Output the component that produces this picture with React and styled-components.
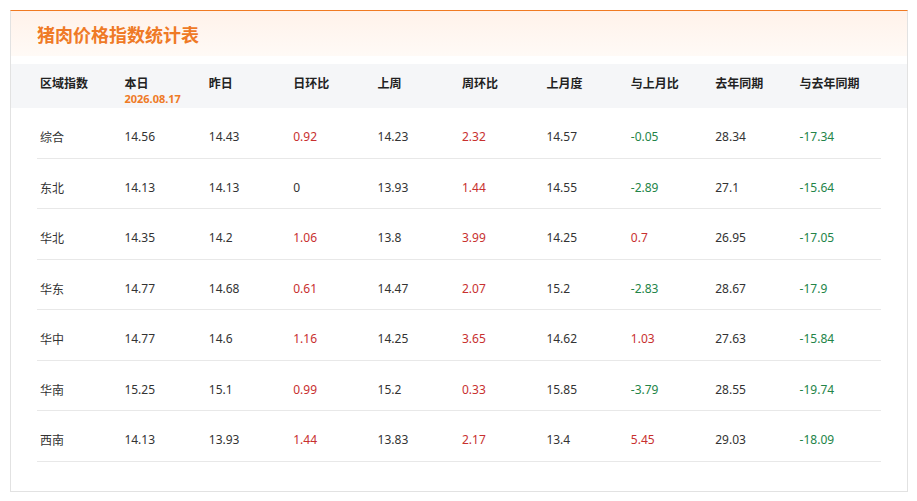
import React from 'react'
import styled, { createGlobalStyle } from 'styled-components'

const GlobalStyle = createGlobalStyle`
  html, body {
    margin: 0;
    padding: 0;
    background: #fff;
  }
  body {
    font-family: "Noto Sans", "Noto Sans CJK SC", sans-serif;
    color: #333;
  }
`

const Page = styled.div`
  padding: 10px 9px 10px 10px;
`

const Card = styled.div`
  border: 1px solid #e2e2e2;
  border-top: 1px solid #f07a22;
  background: #fff;
  padding-bottom: 29px;
`

const CardHeader = styled.div`
  height: 45px;
  display: flex;
  align-items: center;
  padding-left: 26px;
  background: linear-gradient(180deg, #fff2ea 0%, #fffaf6 100%);
  margin-bottom: 8px;
`

const Title = styled.h1`
  margin: 0;
  font-family: "Noto Sans CJK SC", sans-serif;
  font-size: 18px;
  font-weight: 700;
  color: #ef7a26;
  letter-spacing: 0;
`

const HeadBar = styled.div`
  background: #f5f6f8;
  height: 44px;
  padding: 0 26px;
`

const Grid = styled.div`
  display: grid;
  grid-template-columns: repeat(10, 1fr);
`

const HeadCell = styled.div`
  padding: 10px 3px 0;
`

const HeadLabel = styled.div`
  font-family: "Noto Sans CJK SC", sans-serif;
  font-size: 12px;
  font-weight: 700;
  line-height: 18px;
  color: #222;
`

const DateLabel = styled.div`
  font-size: 11px;
  font-weight: 700;
  line-height: 14px;
  color: #ef7a26;
`

const Body = styled.div`
  margin: 0 26px;
`

const Row = styled(Grid)`
  border-bottom: 1px solid #e8e8e8;
  height: 49.5px;
`

const Cell = styled.div`
  padding: 19px 3px 0;
  font-size: 12px;
  line-height: 20px;
  color: ${({ tone }) => (tone === 'up' ? '#c8302f' : tone === 'down' ? '#238448' : '#333')};
`

const columns = ['区域指数', '本日', '昨日', '日环比', '上周', '周环比', '上月度', '与上月比', '去年同期', '与去年同期']
const changeCols = [3, 5, 7, 9]

const rows = [
  ['综合', '14.56', '14.43', '0.92', '14.23', '2.32', '14.57', '-0.05', '28.34', '-17.34'],
  ['东北', '14.13', '14.13', '0', '13.93', '1.44', '14.55', '-2.89', '27.1', '-15.64'],
  ['华北', '14.35', '14.2', '1.06', '13.8', '3.99', '14.25', '0.7', '26.95', '-17.05'],
  ['华东', '14.77', '14.68', '0.61', '14.47', '2.07', '15.2', '-2.83', '28.67', '-17.9'],
  ['华中', '14.77', '14.6', '1.16', '14.25', '3.65', '14.62', '1.03', '27.63', '-15.84'],
  ['华南', '15.25', '15.1', '0.99', '15.2', '0.33', '15.85', '-3.79', '28.55', '-19.74'],
  ['西南', '14.13', '13.93', '1.44', '13.83', '2.17', '13.4', '5.45', '29.03', '-18.09'],
]

function toneOf(idx, value) {
  if (!changeCols.includes(idx)) return undefined
  const n = parseFloat(value)
  if (n > 0) return 'up'
  if (n < 0) return 'down'
  return undefined
}

export default function App() {
  return (
    <Page>
      <GlobalStyle />
      <Card>
        <CardHeader>
          <Title>猪肉价格指数统计表</Title>
        </CardHeader>
        <HeadBar>
          <Grid>
            {columns.map((c, i) => (
              <HeadCell key={c}>
                <HeadLabel>{c}</HeadLabel>
                {i === 1 && <DateLabel>2026.08.17</DateLabel>}
              </HeadCell>
            ))}
          </Grid>
        </HeadBar>
        <Body>
          {rows.map(r => (
            <Row key={r[0]}>
              {r.map((v, i) => (
                <Cell key={i} tone={toneOf(i, v)} style={i === 0 ? { fontFamily: '"Noto Sans CJK SC", sans-serif' } : undefined}>
                  {v}
                </Cell>
              ))}
            </Row>
          ))}
        </Body>
      </Card>
    </Page>
  )
}
